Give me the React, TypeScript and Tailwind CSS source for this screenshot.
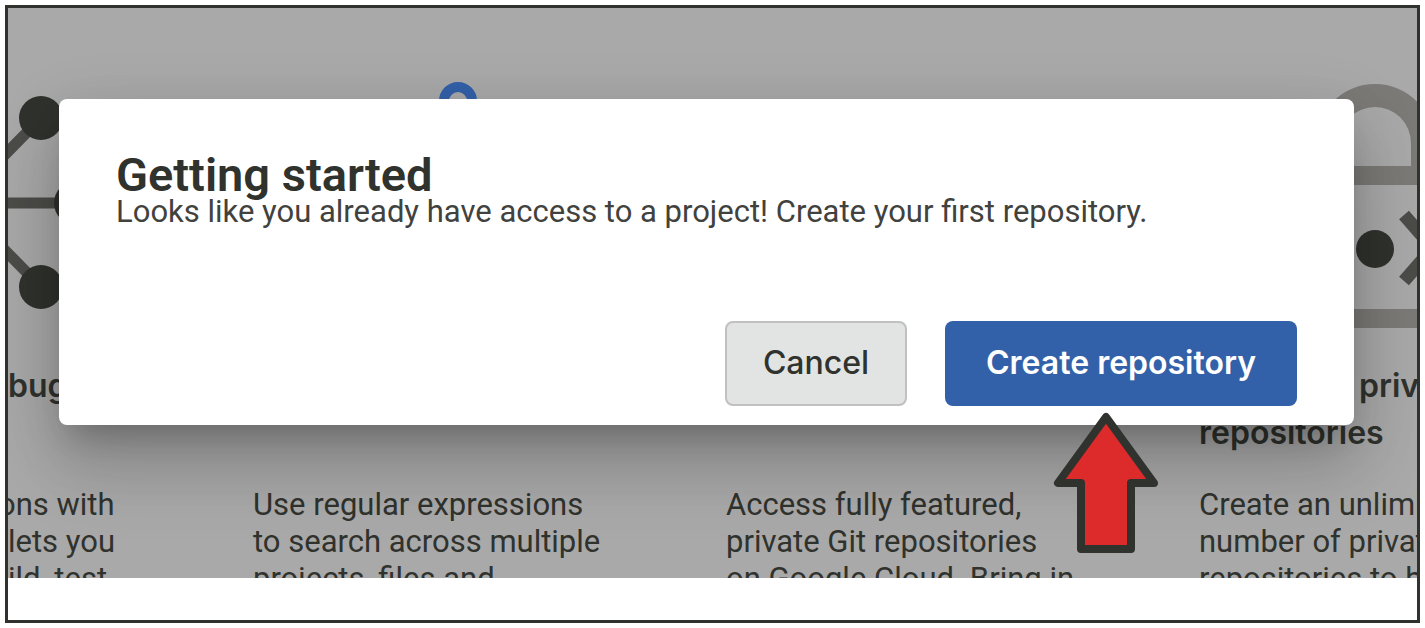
import type { ReactNode } from "react";

function Feature({ icon, title, children }: { icon?: ReactNode; title?: ReactNode; children: ReactNode }) {
  return (
    <article className="min-w-0 whitespace-nowrap">
      <div className="h-[354px]">{icon}</div>
      <h2 className="h-[124px] font-[Inter] text-[32px] leading-[47px] font-semibold">{title}</h2>
      <p className="text-[31px] leading-[37px]">{children}</p>
    </article>
  );
}

function GraphIcon() {
  return (
    <svg width="100" height="330" viewBox="0 0 100 330" aria-hidden="true">
      <g stroke="#4c4d49" strokeWidth="11">
        <path d="M33 110L-12 156M-12 195H60M33 279L-12 233" />
      </g>
      <g fill="#30322d">
        <circle cx="33" cy="110" r="22" />
        <circle cx="68" cy="195" r="22" />
        <circle cx="33" cy="279" r="22" />
      </g>
    </svg>
  );
}

function SearchIcon() {
  return (
    <svg className="ml-[180px]" width="60" height="120" viewBox="0 0 60 120" aria-hidden="true">
      <circle cx="25" cy="93" r="14" fill="none" stroke="#3361a9" strokeWidth="10" />
    </svg>
  );
}

function LockIcon() {
  return (
    <svg className="ml-[117px]" width="120" height="330" viewBox="0 0 120 330" aria-hidden="true">
      <path
        fill="#7b7a77"
        fillRule="evenodd"
        d="M0 177V135a59 59 0 0 1 118 0V177ZM23 158H95V135a36 36 0 0 0-72 0Z"
      />
      <path fill="#7b7a77" d="M0 301H120V320H0Z" />
      <circle cx="59" cy="241" r="19" fill="#30322d" />
      <path d="M88 207L117 240L88 273" fill="none" stroke="#4c4d49" strokeWidth="13" />
    </svg>
  );
}

function Arrow() {
  return (
    <svg
      className="pointer-events-none absolute top-[91px] left-[107px]"
      width="108"
      height="143"
      viewBox="0 0 108 143"
      aria-hidden="true"
    >
      <path
        d="M54 5L6 71H29V137H79V71H102Z"
        fill="#dd2a2b"
        stroke="#30322d"
        strokeWidth="8"
        strokeLinejoin="round"
      />
    </svg>
  );
}

export default function App() {
  return (
    <div className="bg-white p-[5px] font-[Roboto,sans-serif] text-[#30322d]">
      <div className="border-[3px] border-[#30322d] pb-[42px]">
        <main className="relative h-[570px] overflow-hidden bg-[#a9a9a9]">
          <div className="grid grid-cols-[245fr_473fr_473fr_218fr]">
            <Feature icon={<GraphIcon />} title="bug">
              <span className="-ml-[10px]">ons with</span>
              <br />
              lets you
              <br />
              ild, test
            </Feature>
            <Feature icon={<SearchIcon />}>
              Use regular expressions
              <br />
              to search across multiple
              <br />
              projects, files and
            </Feature>
            <Feature>
              Access fully featured,
              <br />
              private Git repositories
              <br />
              on Google Cloud. Bring in
            </Feature>
            <Feature
              icon={<LockIcon />}
              title={
                <>
                  <span className="ml-40">private</span>
                  <br />
                  repositories
                </>
              }
            >
              Create an unlimited
              <br />
              number of private
              <br />
              repositories to build
            </Feature>
          </div>

          <section
            role="dialog"
            aria-labelledby="dialog-title"
            className="absolute top-[91px] right-[63px] left-[51px] rounded-lg bg-white px-[57px] pt-[57px] pb-[19px] shadow-[0_21px_28px_-13px_rgba(0,0,0,0.2),0_45px_71px_5px_rgba(0,0,0,0.14),0_17px_64px_6px_rgba(0,0,0,0.12)]"
          >
            <h1 id="dialog-title" className="text-[47px] leading-[38px] font-semibold">
              Getting started
            </h1>
            <p className="text-[31px] leading-[36px] text-[#41423e]">
              Looks like you already have access to a project! Create your first repository.
            </p>
            <div className="mt-[91px] flex justify-end gap-[38px] font-[Inter] text-[32px]">
              <button
                type="button"
                className="h-[85px] w-[182px] rounded-lg border-2 border-[#bfc0bf] bg-[#e2e4e3] pb-0.5 font-medium"
              >
                Cancel
              </button>
              <div className="relative">
                <button
                  type="button"
                  className="h-[85px] w-[352px] rounded-lg bg-[#3361a9] pb-0.5 font-semibold text-white"
                >
                  Create repository
                </button>
                <Arrow />
              </div>
            </div>
          </section>
        </main>
      </div>
    </div>
  );
}
